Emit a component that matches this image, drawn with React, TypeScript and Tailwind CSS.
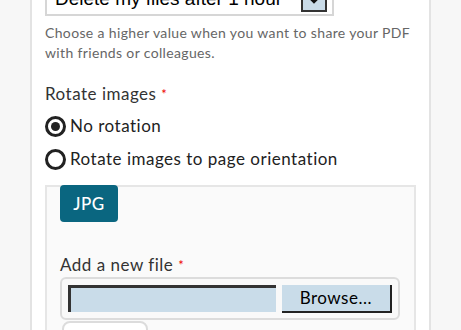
import React from 'react';

const Radio = ({ checked }: { checked?: boolean }) => (
    <span className="w-[21px] h-[21px] rounded-full border-[3px] border-[#222] flex items-center justify-center shrink-0">
        {checked && <span className="w-[9px] h-[9px] rounded-full bg-[#222]" />}
    </span>
);

const App: React.FC = () => {
    return (
        <div className="w-[461px] h-[330px] overflow-hidden bg-[#f7f7f7] font-['Lato',sans-serif] tracking-[0.5px]">
            <div className="ml-[30px] w-[401px] border-x-2 border-[#e3e3e3] bg-white px-[13px] -mt-[17px] pb-8">
                {/* select */}
                <div className="w-[289px] h-[33px] border-2 border-[#d6d6d6] flex items-center justify-between pl-[8px] pr-[5px] tracking-normal">
                    <span className="font-['Liberation_Sans',sans-serif] text-[19px] text-black leading-none -mt-[3px]">Delete my files after 1 hour</span>
                    <span className="w-[26px] h-[25px] bg-[#c9dbe8] border-2 border-[#333] flex items-center justify-center">
                        <svg width="12" height="8" viewBox="0 0 12 8"><path d="M1 1l5 5 5-5" fill="none" stroke="#111" strokeWidth="2.5" /></svg>
                    </span>
                </div>
                <p className="mt-[7px] text-[14px] tracking-[0.35px] leading-[20px] text-[#666] whitespace-nowrap">
                    Choose a higher value when you want to share your PDF<br />with friends or colleagues.
                </p>

                <p className="mt-[20px] text-[17px] text-[#333] leading-[22px]">
                    Rotate images <span className="text-[#e00] text-[13px] align-top">*</span>
                </p>
                <label className="mt-[10px] flex items-center gap-[4px] text-[17px] text-[#222] leading-[22px]">
                    <Radio checked /> No rotation
                </label>
                <label className="mt-[11px] flex items-center gap-[4px] text-[17px] text-[#222] leading-[22px]">
                    <Radio /> Rotate images to page orientation
                </label>

                <div className="mt-[15px] border-2 border-[#e6e6e6] bg-[#fafafa] px-[13px] pb-6">
                    <button className="-mt-[2px] w-[58px] h-[37px] rounded-[4px] bg-[#0a6680] text-white text-[17px] font-medium">JPG</button>
                    <p className="mt-[32px] text-[17px] text-[#333] leading-[22px]">
                        Add a new file <span className="text-[#e00] text-[13px] align-top">*</span>
                    </p>
                    <div className="mt-[1px] w-[340px] h-[43px] rounded-[6px] border-2 border-[#dcdcdc] bg-[#f9f9f9] flex items-center gap-[6px] px-[6px]">
                        <div className="w-[209px] h-[27px] bg-[#c9dce9] border-l-[3px] border-t-[3px] border-[#333]" />
                        <div className="w-[111px] h-[28px] bg-[#c9dce9] border-r-2 border-b-2 border-[#222] flex items-center justify-center text-[17px] text-black">
                            Browse...
                        </div>
                    </div>
                    <div className="mt-[1px] ml-[2px] w-[86px] h-[20px] rounded-t-[8px] border-2 border-[#dcdcdc] bg-white" />
                </div>
            </div>
        </div>
    );
};

export default App;
